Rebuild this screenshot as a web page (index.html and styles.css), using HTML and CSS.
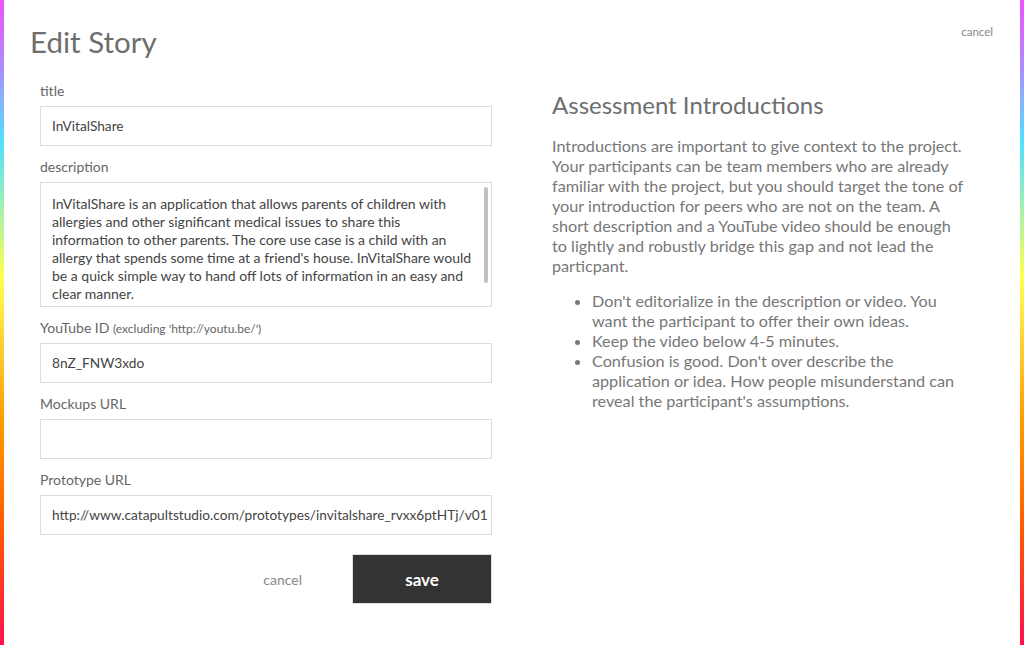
FILE: index.html
```html
<!DOCTYPE html>
<html>
<head>
<meta charset="utf-8">
<link rel="stylesheet" href="styles.css">
</head>
<body>
<div class="page">
  <header class="top">
    <h1 class="page-title">Edit Story</h1>
    <a class="top-cancel">cancel</a>
  </header>
  <main class="content">
    <form class="form">
      <div class="field">
        <label class="label">title</label>
        <div class="input">InVitalShare</div>
      </div>
      <div class="field">
        <label class="label">description</label>
        <div class="textarea">
          <div class="textarea-text">InVitalShare is an application that allows parents of children with<br>allergies and other significant medical issues to share this<br>information to other parents. The core use case is a child with an<br>allergy that spends some time at a friend's house. InVitalShare would<br>be a quick simple way to hand off lots of information in an easy and<br>clear manner.</div>
          <div class="scrollbar"></div>
        </div>
      </div>
      <div class="field">
        <label class="label">YouTube ID <span class="hint">(excluding 'http://youtu.be/')</span></label>
        <div class="input">8nZ_FNW3xdo</div>
      </div>
      <div class="field">
        <label class="label">Mockups URL</label>
        <div class="input"></div>
      </div>
      <div class="field">
        <label class="label">Prototype URL</label>
        <div class="input">http://www.catapultstudio.com/prototypes/invitalshare_rvxx6ptHTj/v01</div>
      </div>
      <div class="actions">
        <a class="cancel">cancel</a>
        <button type="button" class="save">save</button>
      </div>
    </form>
    <aside class="help">
      <h2 class="help-title">Assessment Introductions</h2>
      <p class="help-text">Introductions are important to give context to the project. Your participants can be team members who are already familiar with the project, but you should target the tone of your introduction for peers who are not on the team. A short description and a YouTube video should be enough to lightly and robustly bridge this gap and not lead the particpant.</p>
      <ul class="help-list">
        <li>Don't editorialize in the description or video. You want the participant to offer their own ideas.</li>
        <li>Keep the video below 4-5 minutes.</li>
        <li>Confusion is good. Don't over describe the application or idea. How people misunderstand can reveal the participant's assumptions.</li>
      </ul>
    </aside>
  </main>
</div>
</body>
</html>
```

FILE: styles.css
```css
html, body {
  margin: 0;
  padding: 0;
  background: #fff;
}
body {
  font-family: Lato, "Open Sans", sans-serif;
  color: #666;
}
.page {
  box-sizing: border-box;
  min-height: 100vh;
  border-style: solid;
  border-width: 0 4px;
  border-image: linear-gradient(to bottom, #f050ff 0%, #b088ff 10%, #80b8ff 16%, #50e0ff 22%, #a0f0b0 32%, #ffff50 43%, #ffc830 55%, #ff9c00 65%, #ff5a00 82%, #ff1050 100%) 1;
}
.top {
  display: flex;
  justify-content: space-between;
  align-items: flex-start;
  padding: 22px 27px 0 26px;
}
.page-title {
  margin: 0;
  font-size: 29.5px;
  line-height: 40px;
  font-weight: 400;
  color: #6e6e6e;
}
.top-cancel {
  margin-top: 3px;
  font-size: 11.5px;
  color: #888;
}
.content {
  display: flex;
  gap: 60px;
  padding: 21px 40px 0 36px;
}
.form {
  width: 452px;
  flex: none;
  margin: 0;
}
.field {
  display: flex;
  flex-direction: column;
  margin-bottom: 13px;
}
.label {
  display: block;
  height: 16px;
  font-size: 14px;
  line-height: 16px;
  margin-bottom: 7px;
  color: #666;
}
.hint {
  font-size: 12px;
  line-height: 1;
}
.input {
  box-sizing: border-box;
  height: 40px;
  border: 1px solid #ddd;
  padding: 0 11px;
  font-size: 13.7px;
  line-height: 38px;
  color: #444;
  white-space: nowrap;
  overflow: hidden;
}
.textarea {
  box-sizing: border-box;
  height: 125px;
  border: 1px solid #ddd;
  display: flex;
  overflow: hidden;
  position: relative;
}
.textarea-text {
  padding: 12px 11px 0 11px;
  font-size: 14px;
  line-height: 18px;
  color: #444;
  white-space: nowrap;
}
.scrollbar {
  position: absolute;
  top: 4px;
  right: 3px;
  width: 4px;
  height: 96px;
  border-radius: 2px;
  background: #c1c1c1;
}
.actions {
  display: flex;
  align-items: center;
  justify-content: flex-end;
  gap: 50px;
  margin-top: 19px;
}
.cancel {
  font-size: 14px;
  color: #888;
}
.save {
  width: 140px;
  height: 50px;
  border: 1px solid #ddd;
  background: #333;
  color: #fff;
  font-family: inherit;
  font-size: 17px;
  font-weight: 700;
}
.help {
  width: 415px;
  flex: none;
  color: #777;
}
.help-title {
  margin: 7px 0 16px 0;
  font-size: 24px;
  line-height: 30px;
  font-weight: 400;
  color: #6e6e6e;
}
.help-text {
  margin: 0 0 15px 0;
  font-size: 16.2px;
  line-height: 20px;
}
.help-list {
  margin: 0;
  padding-left: 40px;
  font-size: 16.2px;
  line-height: 20px;
}
```
